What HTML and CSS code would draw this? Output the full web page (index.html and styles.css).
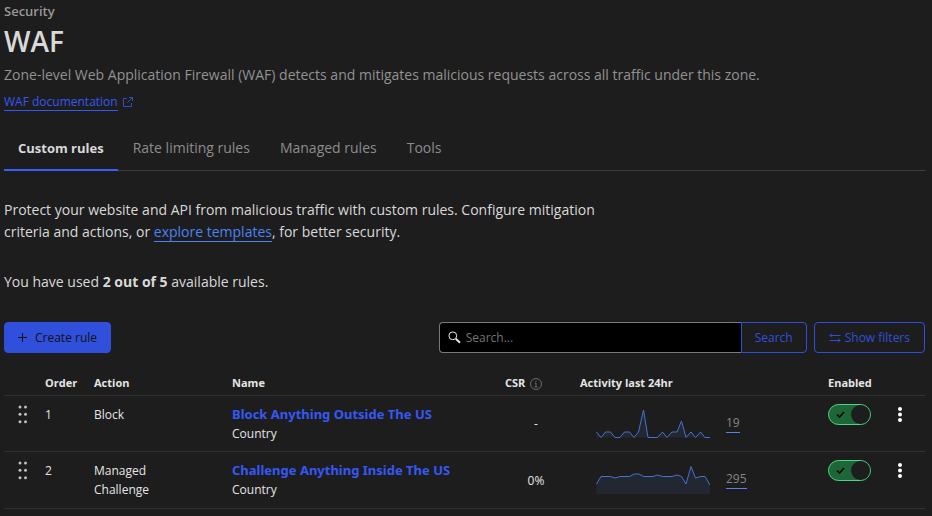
FILE: index.html
```html
<!DOCTYPE html>
<html lang="en">
<head>
<meta charset="utf-8">
<meta name="viewport" content="width=device-width, initial-scale=1">
<title>WAF</title>
<link rel="stylesheet" href="styles.css">
</head>
<body>
<main class="page">
  <header class="header">
    <p class="eyebrow">Security</p>
    <h1 class="title">WAF</h1>
    <p class="lead">Zone-level Web Application Firewall (WAF) detects and mitigates malicious requests across all traffic under this zone.</p>
    <div class="docs">
      <a class="docs-link" href="#docs">WAF documentation</a>
      <svg class="icon-external" viewBox="0 0 10 10" width="10" height="10" aria-hidden="true"><path d="M4 1.500H.5v8h8V6M6 .5h3.500V4M9.500.5 4.500 5.500"/></svg>
    </div>
  </header>

  <nav class="tabs">
    <a class="tab tab-active" href="#custom">Custom rules</a>
    <a class="tab" href="#rate">Rate limiting rules</a>
    <a class="tab" href="#managed">Managed rules</a>
    <a class="tab" href="#tools">Tools</a>
  </nav>

  <p class="intro">Protect your website and API from malicious traffic with custom rules. Configure mitigation criteria and actions, or <a class="intro-link" href="#templates">explore templates</a>, for better security.</p>
  <p class="usage">You have used <strong>2 out of 5</strong> available rules.</p>

  <div class="toolbar">
    <button class="btn btn-primary" type="button">
      <svg viewBox="0 0 9 9" width="9" height="9" aria-hidden="true"><path d="M4.500 0v9M0 4.500h9"/></svg>
      Create rule
    </button>
    <form class="search">
      <label class="search-box">
        <svg viewBox="0 0 13 13" width="13" height="13" aria-hidden="true"><circle cx="4.800" cy="4.800" r="3.900"/><path class="handle" d="m7.800 7.800 4.200 3.900"/></svg>
        <input class="search-input" type="text" placeholder="Search..." aria-label="Search">
      </label>
      <button class="btn btn-outline btn-search" type="button">Search</button>
    </form>
    <button class="btn btn-outline btn-filters" type="button">
      <svg viewBox="0 0 12 10" width="12" height="10" aria-hidden="true"><path d="M11.500 2.500H1M3 .5l-2 2 2 2M.5 7.500H11M9 5.500l2 2-2 2"/></svg>
      Show filters
    </button>
  </div>

  <table class="rules">
    <colgroup>
      <col class="col-drag"><col class="col-order"><col class="col-action"><col class="col-name"><col class="col-csr"><col class="col-activity"><col class="col-enabled"><col class="col-menu">
    </colgroup>
    <thead>
      <tr>
        <th></th><th>Order</th><th>Action</th><th>Name</th>
        <th>CSR
          <svg class="icon-info" viewBox="0 0 12 12" width="12" height="12" aria-hidden="true"><circle cx="6" cy="6" r="5.500"/><path d="M6 2.500v1.200M4.800 5H6v4M4.500 9h3"/></svg>
        </th>
        <th>Activity last 24hr</th><th>Enabled</th><th></th>
      </tr>
    </thead>
    <tbody>
      <tr>
        <td class="drag"><svg viewBox="0 0 10 19" width="10" height="19" aria-hidden="true"><circle cx="2" cy="2" r="1.500"/><circle cx="7.500" cy="2" r="1.500"/><circle cx="2" cy="9.300" r="1.500"/><circle cx="7.500" cy="9.300" r="1.500"/><circle cx="2" cy="16.700" r="1.500"/><circle cx="7.500" cy="16.700" r="1.500"/></svg></td>
        <td>1</td>
        <td><div class="action">Block</div></td>
        <td><a class="rule-link" href="#rule-1">Block Anything Outside The US</a><div>Country</div></td>
        <td class="csr">-</td>
        <td>
          <div class="activity">
            <svg class="spark" viewBox="0 0 114 30" width="114" height="30" aria-hidden="true"><path class="area" d="M.5 23 5 28.500 9.500 23h5L19 28.500h5L28.500 23h5L38 28.500 42.500 23 47.500 1 52 28.500h9.500L66.500 23l4.500 5.500 5-5.500h5L85.500 12 90 28.500 95 23l4.500 5.500 5-5.500 4.500 5.500h5H.5z"/><path class="line" d="M.5 23 5 28.500 9.500 23h5L19 28.500h5L28.500 23h5L38 28.500 42.500 23 47.500 1 52 28.500h9.500L66.500 23l4.500 5.500 5-5.500h5L85.500 12 90 28.500 95 23l4.500 5.500 5-5.500 4.500 5.500h5"/></svg>
            <a class="count" href="#events-1">19</a>
          </div>
        </td>
        <td class="control">
          <label class="toggle"><input type="checkbox" checked aria-label="Rule 1 enabled"><svg viewBox="0 0 9 7" width="9" height="7" aria-hidden="true"><path d="m1 3.500 2.500 2.500L8 1"/></svg></label>
        </td>
        <td class="control"><button class="menu" type="button" aria-label="Rule 1 actions"><svg viewBox="0 0 4 15" width="4" height="15"><circle cx="2" cy="2" r="2"/><circle cx="2" cy="7.500" r="2"/><circle cx="2" cy="13" r="2"/></svg></button></td>
      </tr>
      <tr>
        <td class="drag"><svg viewBox="0 0 10 19" width="10" height="19" aria-hidden="true"><circle cx="2" cy="2" r="1.500"/><circle cx="7.500" cy="2" r="1.500"/><circle cx="2" cy="9.300" r="1.500"/><circle cx="7.500" cy="9.300" r="1.500"/><circle cx="2" cy="16.700" r="1.500"/><circle cx="7.500" cy="16.700" r="1.500"/></svg></td>
        <td>2</td>
        <td><div class="action">Managed Challenge</div></td>
        <td><a class="rule-link" href="#rule-2">Challenge Anything Inside The US</a><div>Country</div></td>
        <td class="csr">0%</td>
        <td>
          <div class="activity">
            <svg class="spark" viewBox="0 0 114 30" width="114" height="30" aria-hidden="true"><path class="area" d="M.5 19 5 11.500h9.500L19 13l5-1.500h9.500L38 9h5l4.500 2.500H57L61.500 10l5 1.500H76L81 10l4.500 1.500L90 19l5-17.500 4.500 11.500 5-1.500h4.500l5 8.500v9H.5z"/><path class="line" d="M.5 19 5 11.500h9.500L19 13l5-1.500h9.500L38 9h5l4.500 2.500H57L61.500 10l5 1.500H76L81 10l4.500 1.500L90 19l5-17.500 4.500 11.500 5-1.500h4.500l5 8.500"/></svg>
            <a class="count" href="#events-2">295</a>
          </div>
        </td>
        <td class="control">
          <label class="toggle"><input type="checkbox" checked aria-label="Rule 2 enabled"><svg viewBox="0 0 9 7" width="9" height="7" aria-hidden="true"><path d="m1 3.500 2.500 2.500L8 1"/></svg></label>
        </td>
        <td class="control"><button class="menu" type="button" aria-label="Rule 2 actions"><svg viewBox="0 0 4 15" width="4" height="15"><circle cx="2" cy="2" r="2"/><circle cx="2" cy="7.500" r="2"/><circle cx="2" cy="13" r="2"/></svg></button></td>
      </tr>
    </tbody>
  </table>
</main>
</body>
</html>
```
FILE: styles.css
```css
* { box-sizing: border-box; }
body {
  margin: 0;
  background: #1d1d1d;
  color: #d9d9d9;
  font-family: "Open Sans", "Noto Sans", sans-serif;
  font-size: 14px;
  line-height: 22px;
}
svg { flex: none; fill: none; stroke: currentColor; }
p, h1 { margin: 0; }
button, input { font: inherit; }
.page { padding: 0 7px 0 4px; }

.eyebrow { color: #999; font-size: 13px; font-weight: 600; }
.title { font-size: 28px; line-height: 38px; font-weight: 600; }
.lead { color: #929292; padding-top: 2px; line-height: 26px; }
.docs { display: flex; align-items: center; gap: 5px; padding-top: 5px; color: #3558f5; font-size: 12px; }
.docs-link { color: inherit; text-decoration: none; border-bottom: 1px solid; line-height: 17px; }
.icon-external { opacity: 0.8; }

.tabs { display: flex; margin-top: 16px; border-bottom: 1px solid #3d3d3d; }
.tab {
  padding: 10px 15px;
  margin-bottom: -1px;
  border-bottom: 2px solid transparent;
  color: #8c8c8c;
  text-decoration: none;
}
.tab-active { color: #d9d9d9; font-size: 13px; font-weight: 700; padding: 10px 14px; border-color: #3b5cff; }

.intro { max-width: 600px; margin-top: 28px; }
.intro-link { color: #4a82f7; text-decoration: none; border-bottom: 1px solid; }
.usage { margin-top: 28px; }
.usage strong { font-weight: 700; }

.toolbar { display: flex; align-items: stretch; gap: 7px; margin-top: 29px; }
.btn {
  display: flex;
  align-items: center;
  justify-content: center;
  gap: 8px;
  height: 31px;
  padding: 0 13px;
  border: 1px solid #3050dc;
  border-radius: 4px;
  font-size: 12px;
  white-space: nowrap;
}
.btn-primary { background: #3050dc; color: #101010; margin-right: auto; }
.btn-outline { background: transparent; color: #3050dc; }
.btn-search { border-radius: 0 4px 4px 0; }
.btn-filters { gap: 4px; padding: 0 14px; }
.search { display: flex; flex: 0 1 368px; }
.search-box {
  display: flex;
  flex: 1;
  align-items: center;
  gap: 5px;
  padding-left: 8px;
  background: #000;
  border: 1px solid #797979;
  border-right: 0;
  border-radius: 4px 0 0 4px;
  color: #e5e5e5;
}
.handle { stroke-width: 2; }
.search-input { flex: 1; min-width: 0; padding: 0; border: 0; outline: 0; background: transparent; color: inherit; font-size: 12px; }
.search-input::placeholder { color: #757575; }

.rules {
  width: 100%;
  margin-top: 16px;
  border-collapse: collapse;
  table-layout: fixed;
  font-size: 12px;
  line-height: 19px;
}
.col-drag { width: 41px; }
.col-order { width: 49px; }
.col-action { width: 138px; }
.col-csr { width: 75px; }
.col-activity { width: 248px; }
.col-enabled { width: 67px; }
.col-menu { width: 30px; }
.rules th { padding: 3px 0 2px; text-align: left; font-weight: 700; font-size: 11px; white-space: nowrap; height: 26px; color: #e5e5e5; }
.rules td { padding: 9px 0 8px; vertical-align: top; color: #e5e5e5; }
.rules tr { border-bottom: 1px solid #303030; }
.rules tbody tr { height: 56px; }
.rules tbody tr:last-child { height: 57px; }
.icon-info { margin-left: 2px; vertical-align: middle; color: #6b6b6b; }
.rules .drag { padding-left: 14px; }
.rules .control { padding-top: 8px; }
.drag svg { display: block; fill: #bfbfbf; stroke: none; }
.action { max-width: 90px; }
.rule-link { color: #3558f5; font-family: "Noto Sans", "Open Sans", sans-serif; font-size: 13px; font-weight: 700; text-decoration: none; white-space: nowrap; }
.rules .csr { padding-right: 26px; padding-left: 13px; text-align: center; vertical-align: middle; }
.activity { display: flex; gap: 16px; padding: 4px 0 0 16px; height: 34px; }
.spark .area { fill: #232731; stroke: none; }
.spark .line { stroke: #4473d0; }
.count { align-self: center; color: #858585; text-decoration: none; border-bottom: 1px solid #5584ee; line-height: 18px; }
.toggle {
  position: relative;
  display: flex;
  align-items: center;
  width: 43px;
  height: 21px;
  padding-left: 7px;
  border: 1px solid #4fd58a;
  border-radius: 11px;
  background: #1c6638;
  color: #000;
}
.toggle input { position: absolute; inset: 0; margin: 0; opacity: 0; }
.toggle svg { stroke-width: 1.5; }
.toggle::after { content: ""; width: 19px; height: 19px; margin-left: auto; border-radius: 50%; background: #1d1d1d; }
.menu { display: flex; padding: 3px 3px; border: 0; background: transparent; color: #fff; }
.menu svg { fill: currentColor; stroke: none; }
```
